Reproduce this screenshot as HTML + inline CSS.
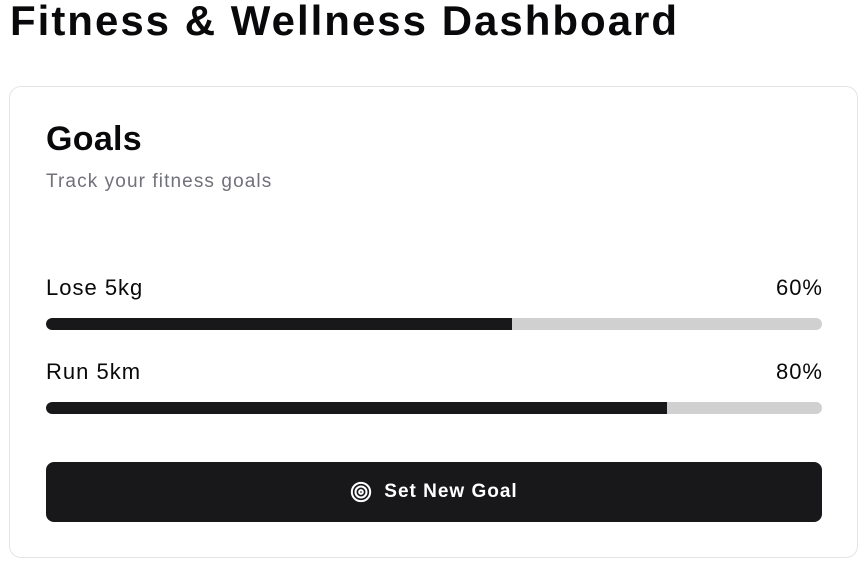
<!DOCTYPE html>
<html><head><style>
*{margin:0;padding:0;box-sizing:border-box}
body{width:858px;height:561px;background:#fff;font-family:"Liberation Sans",sans-serif;color:#09090b;position:relative;overflow:hidden}
h1{position:absolute;left:10px;top:-3px;font-size:42px;font-weight:bold;white-space:nowrap;letter-spacing:2px}
.card{position:absolute;left:9px;top:86px;width:849px;height:472px;border:1px solid #e4e4e7;border-radius:12px}
.t{position:absolute;left:46px;top:120px;font-size:34px;font-weight:bold;letter-spacing:0.3px}
.s{position:absolute;left:46px;top:171px;font-size:19px;color:#71717a;letter-spacing:1.1px}
.lab{position:absolute;font-size:22px;letter-spacing:1px}
.bar{position:absolute;left:46px;width:776px;height:12px;border-radius:6px;background:#d0d0d0;overflow:hidden}
.bar div{height:100%;background:#18181b;border-radius:6px 0 0 6px}
.btn{position:absolute;left:46px;top:462px;width:776px;height:60px;background:#18181b;border-radius:8px;color:#fff;font-size:19px;font-weight:bold;display:flex;align-items:center;justify-content:center;gap:12px;letter-spacing:1px}
</style></head><body>
<h1>Fitness &amp; Wellness Dashboard</h1>
<div class="card"></div>
<div class="t">Goals</div>
<div class="s">Track your fitness goals</div>
<div class="lab" style="left:46px;top:275px">Lose 5kg</div>
<div class="lab" style="right:35px;top:275px">60%</div>
<div class="bar" style="top:318px"><div style="width:60%"></div></div>
<div class="lab" style="left:46px;top:359px">Run 5km</div>
<div class="lab" style="right:35px;top:359px">80%</div>
<div class="bar" style="top:402px"><div style="width:80%"></div></div>
<div class="btn"><svg width="22" height="22" viewBox="0 0 24 24" fill="none" stroke="#fff" stroke-width="2.2"><circle cx="12" cy="12" r="10"/><circle cx="12" cy="12" r="6"/><circle cx="12" cy="12" r="2"/></svg><span>Set New Goal</span></div>
</body></html>
